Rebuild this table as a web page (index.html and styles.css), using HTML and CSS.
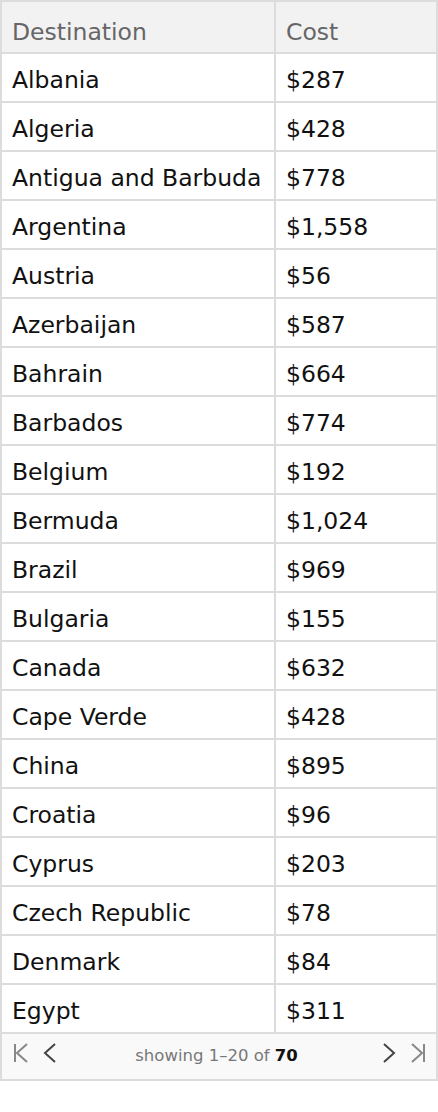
FILE: index.html
```html
<!DOCTYPE html>
<html>
<head>
<meta charset="utf-8">
<link rel="stylesheet" href="styles.css">
</head>
<body>
<div class="wrap">
<table class="grid">
<colgroup><col class="c1"><col class="c2"></colgroup>
<thead>
<tr><th>Destination</th><th>Cost</th></tr>
</thead>
<tbody>
<tr><td>Albania</td><td>$287</td></tr>
<tr><td>Algeria</td><td>$428</td></tr>
<tr><td>Antigua and Barbuda</td><td>$778</td></tr>
<tr><td>Argentina</td><td>$1,558</td></tr>
<tr><td>Austria</td><td>$56</td></tr>
<tr><td>Azerbaijan</td><td>$587</td></tr>
<tr><td>Bahrain</td><td>$664</td></tr>
<tr><td>Barbados</td><td>$774</td></tr>
<tr><td>Belgium</td><td>$192</td></tr>
<tr><td>Bermuda</td><td>$1,024</td></tr>
<tr><td>Brazil</td><td>$969</td></tr>
<tr><td>Bulgaria</td><td>$155</td></tr>
<tr><td>Canada</td><td>$632</td></tr>
<tr><td>Cape Verde</td><td>$428</td></tr>
<tr><td>China</td><td>$895</td></tr>
<tr><td>Croatia</td><td>$96</td></tr>
<tr><td>Cyprus</td><td>$203</td></tr>
<tr><td>Czech Republic</td><td>$78</td></tr>
<tr><td>Denmark</td><td>$84</td></tr>
<tr><td>Egypt</td><td>$311</td></tr>
</tbody>
</table>
<div class="pager">
  <div class="nav">
    <svg class="ico light" width="16" height="20" viewBox="0 0 16 20"><path d="M2 1v18M14 1L4 10l10 9" fill="none" stroke="currentColor" stroke-width="2"/></svg>
    <svg class="ico dark" width="14" height="20" viewBox="0 0 14 20"><path d="M12 1L2 10l10 9" fill="none" stroke="currentColor" stroke-width="2"/></svg>
  </div>
  <div class="info">showing 1–20 of <b>70</b></div>
  <div class="nav">
    <svg class="ico dark" width="14" height="20" viewBox="0 0 14 20"><path d="M2 1l10 9-10 9" fill="none" stroke="currentColor" stroke-width="2"/></svg>
    <svg class="ico light" width="16" height="20" viewBox="0 0 16 20"><path d="M14 1v18M2 1l10 9-10 9" fill="none" stroke="currentColor" stroke-width="2"/></svg>
  </div>
</div>
</div>
</body>
</html>
```
FILE: styles.css
```css
html, body {
  margin: 0;
  padding: 0;
  background: #fff;
}
.wrap {
  width: 438px;
  font-family: "DejaVu Sans", Verdana, sans-serif;
}
.grid {
  width: 438px;
  border-collapse: collapse;
  border: 2px solid #dcdcdc;
  table-layout: fixed;
}
.c1 { width: 274px; }
.grid th, .grid td {
  border: 2px solid #dcdcdc;
  padding: 13px 8px 7px 10px;
  font-size: 23.5px;
  line-height: 27px;
  text-align: left;
  white-space: nowrap;
}
.grid th {
  background: #f2f2f2;
  color: #666;
  font-weight: normal;
  padding-top: 17px;
  padding-bottom: 6px;
}
.grid td {
  color: #111;
}
.pager {
  display: flex;
  align-items: flex-start;
  justify-content: space-between;
  height: 45px;
  border: 2px solid #dcdcdc;
  border-top: none;
  background: #f9f9f9;
  padding: 0 10px 0 11px;
}
.nav {
  display: flex;
  gap: 14px;
  padding-top: 9px;
}
.ico { display: block; }
.light { color: #888; }
.dark { color: #444; }
.info {
  font-size: 16.5px;
  color: #777;
  padding-top: 12px;
  padding-right: 6px;
}
.info b {
  color: #111;
}
```
